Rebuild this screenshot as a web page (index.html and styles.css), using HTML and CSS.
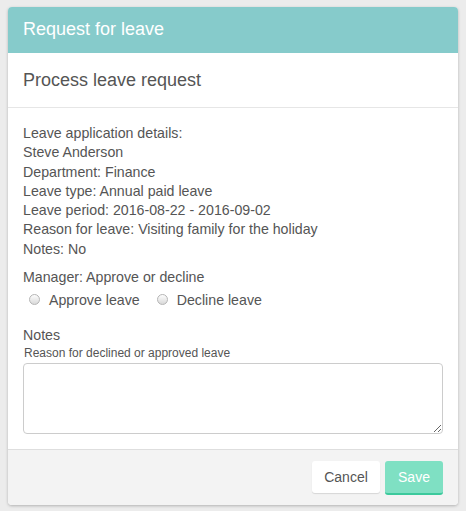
FILE: index.html
```html
<!DOCTYPE html>
<html>
<head>
<meta charset="utf-8">
<link rel="stylesheet" href="styles.css">
</head>
<body>
<div class="panel">
  <div class="panel-header">Request for leave</div>
  <div class="panel-title">Process leave request</div>
  <div class="panel-body">
    <div class="details">
      <div>Leave application details:</div>
      <div>Steve Anderson</div>
      <div>Department: Finance</div>
      <div>Leave type: Annual paid leave</div>
      <div>Leave period: 2016-08-22 - 2016-09-02</div>
      <div>Reason for leave: Visiting family for the holiday</div>
      <div>Notes: No</div>
    </div>
    <div class="field">
      <div class="label">Manager: Approve or decline</div>
      <div class="radios">
        <label class="radio"><span class="dot"></span>Approve leave</label>
        <label class="radio"><span class="dot"></span>Decline leave</label>
      </div>
    </div>
    <div class="field notes">
      <div class="label">Notes</div>
      <div class="hint">Reason for declined or approved leave</div>
      <textarea class="textarea"></textarea>
    </div>
  </div>
  <div class="panel-footer">
    <button class="btn btn-cancel">Cancel</button>
    <button class="btn btn-save">Save</button>
  </div>
</div>
</body>
</html>
```

FILE: styles.css
```css
html, body {
  margin: 0;
  padding: 0;
}
body {
  background: #ececec;
  font-family: "Liberation Sans", Arial, sans-serif;
  color: #555;
  padding: 7px 8px;
}
.panel {
  width: 450px;
  background: #fff;
  border-radius: 4px;
  box-shadow: 0 1px 3px rgba(0,0,0,0.25);
  overflow: hidden;
}
.panel-header {
  background: #86cbcb;
  color: #fff;
  font-size: 18px;
  height: 46px;
  line-height: 44px;
  padding: 0 15px;
}
.panel-title {
  font-size: 18px;
  line-height: 21px;
  padding: 17px 15px 16px;
  border-bottom: 1px solid #e6e6e6;
  color: #555;
}
.panel-body {
  padding: 16px 15px 15px;
  font-size: 14.2px;
}
.details {
  line-height: 19.3px;
}
.field {
  margin-top: 9px;
}
.label {
  line-height: 19px;
}
.radios {
  display: flex;
  gap: 17px;
  padding-left: 6px;
  margin-top: 3px;
  line-height: 20px;
}
.radio {
  display: flex;
  align-items: center;
}
.dot {
  width: 11px;
  height: 11px;
  border-radius: 50%;
  border: 1px solid #b5b5b5;
  background: linear-gradient(#fdfdfd, #d9d9d9);
  box-sizing: border-box;
  margin-right: 9px;
  margin-top: -1px;
}
.notes {
  margin-top: 16px;
}
.hint {
  font-size: 12px;
  line-height: 16px;
  margin-left: 1px;
}
.textarea {
  display: block;
  box-sizing: border-box;
  width: 420px;
  height: 71px;
  margin-top: 2px;
  border: 1px solid #ccc;
  border-radius: 4px;
  resize: vertical;
  font-family: inherit;
}
.panel-footer {
  background: #f3f3f3;
  border-top: 1px solid #dedede;
  height: 56px;
  box-sizing: border-box;
  padding: 11px 15px 0;
  display: flex;
  justify-content: flex-end;
  align-items: flex-start;
  gap: 5px;
}
.btn {
  font-family: inherit;
  font-size: 14px;
  border: none;
  border-radius: 3px;
  height: 32px;
  padding: 0 12px;
  cursor: pointer;
}
.btn-cancel {
  background: #fff;
  color: #555;
  width: 68px;
  box-shadow: 0 1px 1px rgba(0,0,0,0.12);
}
.btn-save {
  background: #7fe0c3;
  color: #fff;
  width: 58px;
  height: 34px;
  border-bottom: 2px solid #3cc99c;
}
```
